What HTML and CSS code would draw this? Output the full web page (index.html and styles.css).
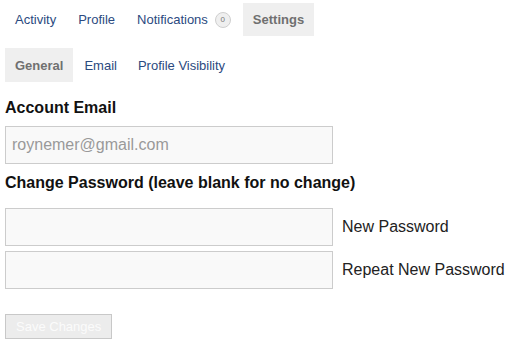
FILE: index.html
```html
<!DOCTYPE html>
<html>
<head>
<meta charset="utf-8">
<link rel="stylesheet" href="styles.css">
</head>
<body>
<nav class="tabs tabs-main">
  <a class="tab" href="#">Activity</a>
  <a class="tab" href="#">Profile</a>
  <a class="tab" href="#">Notifications <span class="badge">0</span></a>
  <a class="tab active" href="#">Settings</a>
</nav>
<nav class="tabs tabs-sub">
  <a class="tab active" href="#">General</a>
  <a class="tab" href="#">Email</a>
  <a class="tab" href="#">Profile Visibility</a>
</nav>
<form class="settings">
  <h3 class="heading heading-email">Account Email</h3>
  <input class="field" type="text" placeholder="roynemer@gmail.com">
  <h3 class="heading heading-pass">Change Password (leave blank for no change)</h3>
  <div class="row">
    <input class="field" type="password">
    <label class="label">New Password</label>
  </div>
  <div class="row">
    <input class="field" type="password">
    <label class="label">Repeat New Password</label>
  </div>
  <button class="save" type="button">Save Changes</button>
</form>
</body>
</html>
```

FILE: styles.css
```css
html, body {
  margin: 0;
  padding: 0;
  background: #fff;
}
body {
  font-family: "Liberation Sans", Arial, sans-serif;
  color: #111;
  width: 509px;
  height: 345px;
  overflow: hidden;
}
.tabs {
  display: flex;
  margin-left: 5px;
}
.tabs-main {
  margin-top: 3px;
  gap: 2px;
}
.tabs-sub {
  margin-top: 12px;
  gap: 1px;
}
.tab {
  display: flex;
  align-items: center;
  padding: 0 10px;
  font-size: 13px;
  color: #2b4a80;
  text-decoration: none;
}
.tabs-main .tab {
  height: 33px;
}
.tabs-sub .tab {
  height: 34px;
}
.tab.active {
  background: #efefef;
  color: #707070;
  font-weight: bold;
}
.badge {
  display: inline-flex;
  align-items: center;
  justify-content: center;
  width: 14px;
  height: 14px;
  margin-left: 7px;
  border: 1px solid #cfcfcf;
  border-radius: 50%;
  background: #efefef;
  color: #777;
  font-size: 8px;
}
.settings {
  margin: 0 0 0 5px;
}
.heading {
  margin: 0;
  font-size: 16px;
  font-weight: bold;
  line-height: 18px;
  color: #111;
}
.heading-email {
  margin-top: 17px;
  margin-bottom: 9px;
}
.heading-pass {
  margin-top: 10px;
  margin-bottom: 16px;
}
.field {
  box-sizing: border-box;
  display: block;
  width: 328px;
  height: 38px;
  margin: 0;
  padding: 0 6px;
  border: 1px solid #cccccc;
  background: #f9f9f9;
  font-family: "Liberation Sans", Arial, sans-serif;
  font-size: 16px;
  color: #333;
  outline: none;
}
.field::placeholder {
  color: #999;
}
.row {
  display: flex;
  align-items: center;
  margin-bottom: 5px;
}
.label {
  margin-left: 9px;
  font-size: 16px;
  color: #222;
}
.save {
  display: block;
  box-sizing: border-box;
  margin-top: 25px;
  height: 25px;
  padding: 0 10px;
  border: 1px solid #c8c8c8;
  border-radius: 0;
  background: #ececec;
  color: #fbfbfb;
  font-family: "Liberation Sans", Arial, sans-serif;
  font-size: 13px;
}
```
